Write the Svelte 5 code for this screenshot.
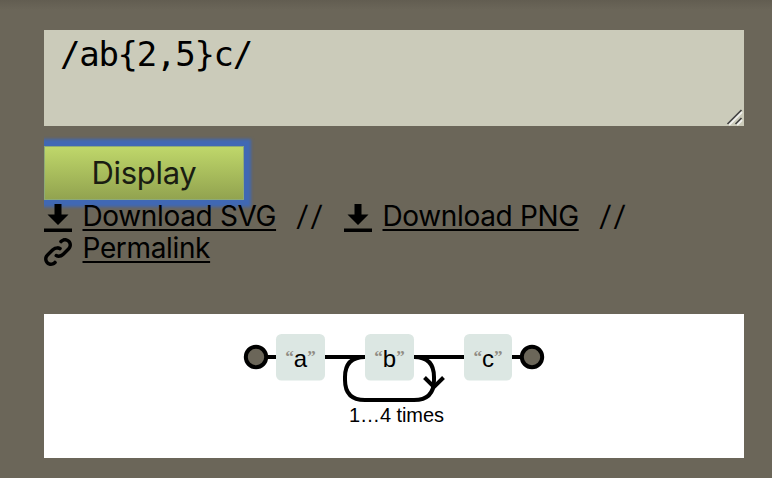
<script>
  const literals = [
    { x: 276, w: 49, ch: 'a' },
    { x: 365, w: 49, ch: 'b' },
    { x: 464, w: 48, ch: 'c' }
  ];
</script>

{#snippet download()}
  <svg class="icon" viewBox="0 0 8 8"><path d="M3 0v3h-2l3 3 3-3h-2v-3h-2zm-3 7v1h8v-1h-8z" /></svg>
{/snippet}

<main>
  <div class="field">
    <span>/ab&#123;2,5&#125;c/</span>
    <svg class="grip" width="18" height="18" viewBox="0 0 18 18">
      <path d="M3 17 16 4M11 17 16 12" stroke="#f2f2ee" stroke-width="2" />
      <path d="M1.500 16 15.500 2M9.500 16 15.500 10" stroke="#444" stroke-width="1.700" />
    </svg>
  </div>
  <div class="clip"><button>Display</button></div>
  <ul>
    <li>{@render download()}<a href="#svg">Download SVG</a><i>//</i></li>
    <li>{@render download()}<a href="#png">Download PNG</a><i>//</i></li>
    <li>
      <svg class="icon link" viewBox="0 0 8 8"><path d="M5.88.03c-.18.01-.36.03-.53.09-.27.1-.53.25-.75.47a.5.5 0 1 0 .69.69c.11-.11.24-.17.38-.22.35-.12.78-.07 1.06.22.39.39.39 1.04 0 1.44l-1.5 1.5c-.44.44-.8.48-1.06.47-.26-.01-.41-.13-.41-.13a.5.5 0 1 0-.5.88s.34.22.84.25c.5.03 1.2-.16 1.81-.78l1.5-1.5c.78-.78.78-2.04 0-2.81-.28-.28-.61-.45-.97-.53-.18-.04-.38-.04-.56-.03zm-2 2.31c-.5-.02-1.19.15-1.78.75l-1.5 1.5c-.78.78-.78 2.04 0 2.81.56.56 1.36.72 2.06.47.27-.1.53-.25.75-.47a.5.5 0 1 0-.69-.69c-.11.11-.24.17-.38.22-.35.12-.78.07-1.06-.22-.39-.39-.39-1.04 0-1.44l1.5-1.5c.4-.4.75-.45 1.03-.44.28.01.47.09.47.09a.5.5 0 1 0 .44-.88s-.34-.2-.84-.22z" /></svg><a href="#permalink">Permalink</a>
    </li>
  </ul>
  <div class="results">
    <svg width="700" height="144" viewBox="44 314 700 144">
      <g fill="none" stroke="#000" stroke-width="4">
        <path d="M256 357H532" />
        <path d="M365 357Q345 357 345 377V380Q345 400 365 400H414Q434 400 434 380V377Q434 357 414 357" />
        <path d="M424.500 377.500 434 387 443.500 377.500" />
        <circle cx="256" cy="357" r="10.200" fill="#6b6659" />
        <circle cx="532" cy="357" r="10.200" fill="#6b6659" />
      </g>
      {#each literals as l}
        <rect x={l.x} y="334" width={l.w} height="46.500" rx="5.500" fill="#dce7e3" />
        <text class="literal" x={l.x + l.w / 2} y="366.500" text-anchor="middle"><tspan class="quote">“</tspan>{l.ch}<tspan class="quote">”</tspan></text>
      {/each}
      <text class="times" x="349" y="422" textLength="95">1…4 times</text>
    </svg>
  </div>
</main>

<style>
  :global(body) { background: #6b6659; }
  main {
    box-sizing: border-box;
    height: 478px;
    padding: 30px 28px 0 44px;
    overflow: hidden;
    background: linear-gradient(#625d51, #6b6659 10px);
    font-family: Inter, "Liberation Sans", sans-serif;
    color: #000;
  }
  .field {
    position: relative;
    box-sizing: border-box;
    height: 96px;
    padding: 3px 16px;
    background: #cbcbba;
    font: 34px/42px "DejaVu Sans Mono", monospace;
    letter-spacing: -1.27px;
  }
  .grip { position: absolute; right: 0; bottom: 0; }
  .clip {
    width: 220px;
    height: 74px;
    padding-top: 10px;
    margin-top: 10px;
    margin-bottom: -16px;
    box-sizing: border-box;
    overflow: hidden;
  }
  button {
    display: block;
    width: 200px;
    height: 54px;
    padding: 0;
    border: 1px solid #8daa78;
    background: linear-gradient(#bfd76a, #92a34f);
    box-shadow: 0 0 3px 7px #4068b4;
    font: 31px/52px Inter, sans-serif;
    letter-spacing: -0.3px;
    color: #1a1d12;
  }
  ul {
    position: relative;
    display: flex;
    flex-wrap: wrap;
    height: 120px;
    margin: 0;
    padding: 0;
    align-content: flex-start;
    list-style: none;
    font-size: 28px;
    line-height: 32px;
    letter-spacing: -0.35px;
  }
  li { display: flex; height: 32px; width: 300px; }
  .icon { flex: none; width: 28px; height: 28px; margin: 10px 10.5px 0 0; }
  .link { margin-top: 12px; }
  a {
    padding-top: 6px;
    color: inherit;
    text-decoration-thickness: 2px;
    text-underline-offset: 3px;
    text-decoration-skip-ink: none;
    white-space: nowrap;
  }
  i {
    font-style: normal;
    letter-spacing: 4px;
    padding: 6px 0 0 22px;
    transform: skewX(-6deg);
  }
  .results { height: 144px; background: #fff; }
  .results svg { display: block; }
  .literal { font: 24px "Liberation Sans", sans-serif; }
  .quote { font: bold 17px "Liberation Serif", serif; fill: #908c83; baseline-shift: 5px; }
  .times { font: 20px "Liberation Sans", sans-serif; }
</style>
